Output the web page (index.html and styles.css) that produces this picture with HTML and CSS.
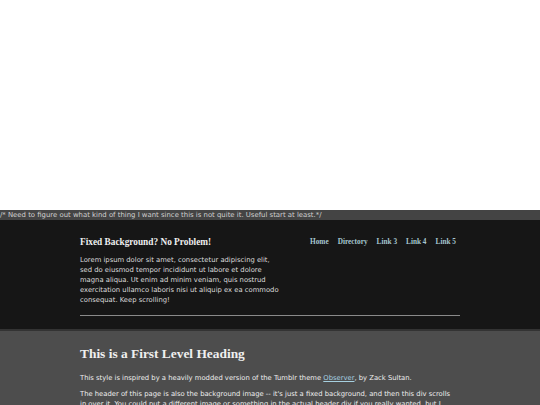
FILE: index.html
```html
<!DOCTYPE html>
<html>
<head>
<meta charset="utf-8">
<link rel="stylesheet" href="styles.css">
</head>
<body>
<div class="backdrop"></div>
<div class="comment">/* Need to figure out what kind of thing I want since this is not quite it. Useful start at least.*/</div>
<header class="header">
  <div class="header-inner">
    <div class="intro">
      <h2 class="title">Fixed Background? No Problem!</h2>
      <p class="lead">Lorem ipsum dolor sit amet, consectetur adipiscing elit,<br>sed do eiusmod tempor incididunt ut labore et dolore magna aliqua. Ut enim ad minim veniam, quis nostrud exercitation ullamco laboris nisi ut aliquip ex ea commodo consequat. Keep scrolling!</p>
    </div>
    <nav class="nav">
      <a href="#">Home</a>
      <a href="#">Directory</a>
      <a href="#">Link 3</a>
      <a href="#">Link 4</a>
      <a href="#">Link 5</a>
    </nav>
  </div>
  <hr class="rule">
</header>
<main class="content">
  <h1 class="heading">This is a First Level Heading</h1>
  <p class="text">This style is inspired by a heavily modded version of the Tumblr theme <a href="#">Observer</a>, by Zack Sultan.</p>
  <p class="text">The header of this page is also the background image -- it's just a fixed background, and then this div scrolls in over it. You could put a different image or something in the actual header div if you really wanted, but I</p>
</main>
</body>
</html>
```
FILE: styles.css
```css
html, body {
  margin: 0;
  padding: 0;
}
body {
  background: #ffffff;
  font-family: "DejaVu Sans", Verdana, sans-serif;
  overflow: hidden;
}
.backdrop {
  height: 210px;
}
.comment {
  background: #444444;
  color: #d0d0d0;
  font-size: 6.9px;
  height: 10px;
  line-height: 10px;
  white-space: nowrap;
}
.header {
  background: #161616;
  padding: 16px 80px 13px;
  border-bottom: 2px solid #333333;
}
.header-inner {
  display: flex;
  justify-content: space-between;
  align-items: flex-start;
}
.intro {
  width: 202px;
}
.title {
  margin: 0;
  font-family: "Liberation Serif", "Times New Roman", serif;
  font-weight: bold;
  font-size: 9.3px;
  line-height: 12px;
  color: #eeeeee;
}
.lead {
  margin: 7px 0 0;
  font-size: 6.8px;
  line-height: 10px;
  color: #dddddd;
}
.nav {
  display: flex;
  gap: 9px;
  padding-right: 4px;
  padding-top: 1px;
}
.nav a {
  font-family: "Liberation Serif", "Times New Roman", serif;
  font-weight: bold;
  font-size: 7.3px;
  line-height: 10px;
  color: #a6c6d0;
  text-decoration: none;
}
.rule {
  margin: 10px 0 0;
  border: 0;
  height: 1px;
  background: #8a8a8a;
}
.content {
  background: #4d4d4d;
  padding: 15px 84px 20px 80px;
  min-height: 200px;
}
.heading {
  margin: 0;
  font-family: "Liberation Serif", "Times New Roman", serif;
  font-weight: bold;
  font-size: 13.4px;
  line-height: 16px;
  color: #f0f0f0;
}
.text {
  margin: 11px 0 0;
  font-size: 6.8px;
  line-height: 10px;
  color: #eeeeee;
}
.text + .text {
  margin-top: 6px;
}
.text a {
  color: #a6d0e0;
}
```
